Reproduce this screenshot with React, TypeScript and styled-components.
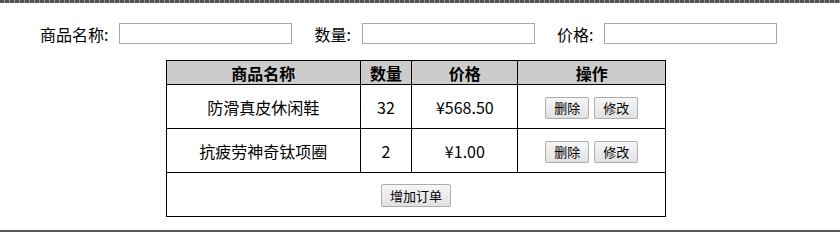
import React from 'react';
import styled, { createGlobalStyle } from 'styled-components';

const GlobalStyle = createGlobalStyle`
  body {
    margin: 0;
    background: #fff;
    font-family: 'Noto Sans CJK SC', 'Noto Sans', sans-serif;
    color: #000;
  }
`;

const orders = [
  { name: '防滑真皮休闲鞋', qty: 32, price: 568.5 },
  { name: '抗疲劳神奇钛项圈', qty: 2, price: 1 },
];

const Page = styled.div`
  width: 840px;
  height: 232px;
  display: flex;
  flex-direction: column;
  box-sizing: border-box;
  border-bottom: 2px solid #555;
`;

const TopBar = styled.div`
  height: 3px;
  background: repeating-linear-gradient(90deg, #555 0 4px, #9a9a9a 4px 5px);
`;

const FormRow = styled.div`
  display: flex;
  align-items: center;
  gap: 22px;
  padding: 20px 0 0 40px;
`;

const Field = styled.label`
  display: flex;
  align-items: center;
  font-size: 16px;
  line-height: 20px;
`;

const Input = styled.input`
  width: 173px;
  height: 21px;
  box-sizing: border-box;
  margin-left: 11px;
  border: 1px solid #a9a9a9;
  padding: 1px 2px;
  font-size: 13px;
  outline: none;
`;

const Table = styled.table`
  width: 500px;
  margin: 16px 0 0 166px;
  border-collapse: collapse;
  font-size: 16px;
  th, td {
    border: 1px solid #000;
    text-align: center;
    padding: 0;
  }
  th {
    height: 23px;
    line-height: 20px;
    background: #ccc;
    font-weight: 700;
  }
  td {
    height: 43px;
  }
`;

const Btn = styled.button`
  height: 22px;
  padding: 0 8px;
  font-family: 'Noto Sans CJK SC', sans-serif;
  font-size: 13px;
  line-height: 18px;
  color: #000;
  border: 1px solid #adadad;
  border-radius: 2px;
  background: linear-gradient(#f6f6f6, #e1e1e1);
  cursor: pointer;
  & + & {
    margin-left: 5px;
  }
`;

const AddBtn = styled(Btn)`
  height: 23px;
  padding: 0 8px;
`;

export default function App() {
  return (
    <Page>
      <GlobalStyle />
      <TopBar />
      <FormRow>
        <Field>
          商品名称:
          <Input />
        </Field>
        <Field>
          数量:
          <Input />
        </Field>
        <Field>
          价格:
          <Input />
        </Field>
      </FormRow>
      <Table>
        <colgroup>
          <col style={{ width: 194 }} />
          <col style={{ width: 52 }} />
          <col style={{ width: 106 }} />
          <col style={{ width: 148 }} />
        </colgroup>
        <thead>
          <tr>
            <th>商品名称</th>
            <th>数量</th>
            <th>价格</th>
            <th>操作</th>
          </tr>
        </thead>
        <tbody>
          {orders.map((o, i) => (
            <tr key={i}>
              <td>{o.name}</td>
              <td>{o.qty}</td>
              <td>¥{o.price.toFixed(2)}</td>
              <td>
                <Btn>删除</Btn>
                <Btn>修改</Btn>
              </td>
            </tr>
          ))}
          <tr>
            <td colSpan={4}>
              <AddBtn>增加订单</AddBtn>
            </td>
          </tr>
        </tbody>
      </Table>
    </Page>
  );
}
